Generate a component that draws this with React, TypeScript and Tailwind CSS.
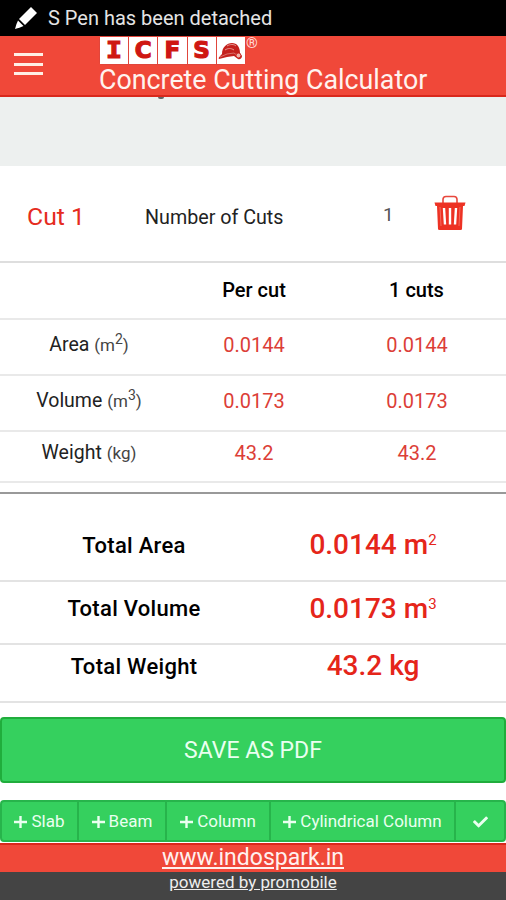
import { FaCheck } from 'react-icons/fa';

const logoLetters = [
  { letter: 'I', style: "scale-x-115 font-['DejaVu_Sans_Mono',monospace]" },
  { letter: 'C', style: "font-['DejaVu_Sans',sans-serif]" },
  { letter: 'F', style: "font-['DejaVu_Sans',sans-serif]" },
  { letter: 'S', style: "font-['DejaVu_Sans',sans-serif]" },
];

const cutRows = [
  { label: 'Area', unit: 'm', power: '2', value: '0.0144', style: 'h-14 pb-1' },
  { label: 'Volume', unit: 'm', power: '3', value: '0.0173', style: 'h-14 pb-1' },
  { label: 'Weight', unit: 'kg', power: '', value: '43.2', style: 'h-[51px] pb-2' },
];

const totals = [
  { label: 'Total Area', value: '0.0144 m', power: '2', style: 'h-[88px] pt-4' },
  { label: 'Total Volume', value: '0.0173 m', power: '3', style: 'h-[63px] pb-2' },
  { label: 'Total Weight', value: '43.2 kg', power: '', style: 'h-[58px] pb-3.5' },
];

const shapes = [
  { label: 'Slab', style: 'w-[77px]' },
  { label: 'Beam', style: 'w-[88px]' },
  { label: 'Column', style: 'w-[104px]' },
  { label: 'Cylindrical Column', style: 'w-[185px]' },
];

function PenIcon() {
  return (
    <svg className="h-6 w-6" viewBox="0 0 24 24" fill="#fff">
      <path d="M17 1 23 7 11 19 5 13Z" />
      <path d="M4 14.500 9.500 20 6 21.500 1 23 2.500 18Z" />
    </svg>
  );
}

function HelmetIcon() {
  return (
    <svg className="h-[20px] w-[25px]" viewBox="0 0 25 20">
      <path d="M4 13C4 6 9 2 14 2c5 0 8 4 8 10l2 3c0 2-2 4-4 3l-4-3-7 1-8 2c-1-1 1-3 3-5Z" fill="#c4201c" />
      <path d="M9 5c3-2 7-2 9 0M7 9c3-2 6-2 9 0" fill="none" stroke="#e9a39c" strokeWidth="0.9" />
      <path d="M2 16l7-3 7-1 4 3" fill="none" stroke="#e9a39c" strokeWidth="0.6" />
      <circle cx="20.500" cy="14.500" r="2.400" fill="#f0b4ac" stroke="#c4201c" strokeWidth="0.8" />
    </svg>
  );
}

function TrashIcon() {
  return (
    <svg className="h-[36px] w-8" viewBox="0 0 32 36" fill="none">
      <path d="M9 8V4.500Q9 1.500 12 1.500H20Q23 1.500 23 4.500V8" stroke="#e8483d" strokeWidth="1.6" />
      <path d="M.5 7.500H31.500L30.500 11H29L28 34Q28 35 26.500 35H5.500Q4 35 4 34L3 11H1.500Z" fill="#ed3224" />
      <path d="M10 13 11 29.500M16 13V29.500M22 13 21 29.500" stroke="#fff" strokeWidth="2.400" />
      <path d="M6 12 7 31M26 12 25 31" stroke="#f88176" strokeWidth="0.700" />
    </svg>
  );
}

function PlusIcon() {
  return (
    <svg className="h-[14px] w-[13px]" viewBox="0 0 13 14">
      <path d="M6.500 1V13M0 7H13" stroke="#eafff0" strokeWidth="2.400" />
    </svg>
  );
}

function Logo() {
  return (
    <div className="flex h-[30px] items-start">
      <div className="flex h-[29px] gap-px rounded-sm bg-[#e0463c] p-px">
        {logoLetters.map(({ letter, style }) => (
          <span key={letter} className="flex h-[27px] w-[28.2px] items-center justify-center bg-white">
            <span
              className={`text-[23px] leading-none font-bold text-[#cf1712] [-webkit-text-stroke:1.2px_#cf1712] ${style}`}
            >
              {letter}
            </span>
          </span>
        ))}
        <span className="flex h-[27px] w-[28.2px] items-center justify-center bg-white">
          <HelmetIcon />
        </span>
      </div>
      <span className="text-[15px] leading-[14px] font-medium text-[#ffd9d4]">®</span>
    </div>
  );
}

function Header() {
  return (
    <header className="flex h-[61px] border-b-2 border-[#d9281c] bg-[#f04839]">
      <button className="ml-3.5 mt-[17px] flex h-[22px] w-[29px] flex-col justify-between" aria-label="Menu">
        <span className="h-[3px] w-full bg-[#fff0e6]" />
        <span className="h-[3px] w-full bg-[#fff0e6]" />
        <span className="h-[3px] w-full bg-[#fff0e6]" />
      </button>
      <div className="ml-14">
        <Logo />
        <h1 className="text-[26.8px] leading-[29px] whitespace-nowrap text-[#fff3ef]">
          Concrete Cutting Calculator
        </h1>
      </div>
    </header>
  );
}

function App() {
  return (
    <div className="h-[900px] w-[506px] overflow-hidden bg-white font-[Roboto,sans-serif] text-[#222]">
      <div className="flex h-9 items-center gap-2.5 bg-black pl-3.5 text-[20px] text-[#e4e4e4]">
        <PenIcon />
        <span className="whitespace-nowrap">S Pen has been detached</span>
      </div>
      <Header />
      <div className="h-[69px] bg-[#edf0ef]">
        <div className="ml-[158px] h-[2px] w-1.5 rounded-b-full bg-[#666]" />
      </div>

      <section className="flex h-[97px] items-center border-b-2 border-[#dedede] pt-[7px]">
        <span className="ml-[27px] w-[118px] text-[24.8px] text-[#e52b20]">Cut 1</span>
        <span className="w-[238px] pt-px text-[19.7px]">Number of Cuts</span>
        <span className="w-[51px] pb-1 text-[19px] text-[#555]">1</span>
        <button className="pb-[9px]" aria-label="Delete cut">
          <TrashIcon />
        </button>
      </section>

      <section className="text-center text-[20px]">
        <div className="grid h-[57px] grid-cols-[178px_152px_173px] items-center border-b-2 border-[#e9e9e9] pb-0.5 font-medium text-black">
          <span />
          <span>Per cut</span>
          <span>1 cuts</span>
        </div>
        {cutRows.map((row) => (
          <div
            key={row.label}
            className={`grid grid-cols-[178px_152px_174px] items-center border-b-2 border-[#e9e9e9] ${row.style}`}
          >
            <span className="text-[19.5px]">
              {row.label}{' '}
              <span className="text-[17px] text-[#444]">
                ({row.unit}
                {row.power && <sup className="-top-[7px] text-[14px] leading-none">{row.power}</sup>})
              </span>
            </span>
            <span className="text-[#dc3e37]">{row.value}</span>
            <span className="text-[#dc3e37]">{row.value}</span>
          </div>
        ))}
      </section>

      <section className="mt-[9px] border-t-2 border-[#999] text-center">
        {totals.map((total) => (
          <div
            key={total.label}
            className={`grid grid-cols-[268px_210px] items-center border-b-2 border-[#e3e3e3] ${total.style}`}
          >
            <span className="text-[22px] font-medium tracking-[0.3px] text-black">{total.label}</span>
            <span className="text-[28px] font-medium text-[#e5251a]">
              {total.value}
              {total.power && <sup className="-top-[9px] text-[15px] leading-none font-normal">{total.power}</sup>}
            </span>
          </div>
        ))}
      </section>

      <button className="mt-3.5 flex h-[66px] w-full items-center justify-center rounded-sm border-2 border-[#20ad3c] bg-[#35d05e] pt-0.5 text-[23px] text-[#eafff0]">
        SAVE AS PDF
      </button>

      <div className="mt-[17px] flex h-[42px] rounded-sm border-2 border-[#27b44b] bg-[#35d05e] text-[17px] text-[#eafff0]">
        {shapes.map((shape) => (
          <button
            key={shape.label}
            className={`flex shrink-0 items-center justify-center gap-1 border-r-2 border-[#27b44b] pt-0.5 whitespace-nowrap ${shape.style}`}
          >
            <PlusIcon />
            {shape.label}
          </button>
        ))}
        <button className="flex flex-1 items-center justify-center pt-0.5" aria-label="Done">
          <FaCheck className="h-4 w-[15px]" />
        </button>
      </div>

      <footer className="mt-px text-center">
        <div className="h-[29px] border-t-2 border-[#d9281c] bg-[#f04839]">
          <a className="block text-[23px] leading-[26px] text-[#fff0ee] underline">www.indospark.in</a>
        </div>
        <div className="h-7 bg-[#444] text-[17px] leading-5 text-[#eee]">
          <a className="underline">powered by promobile</a>
        </div>
      </footer>
    </div>
  );
}

export default App;
